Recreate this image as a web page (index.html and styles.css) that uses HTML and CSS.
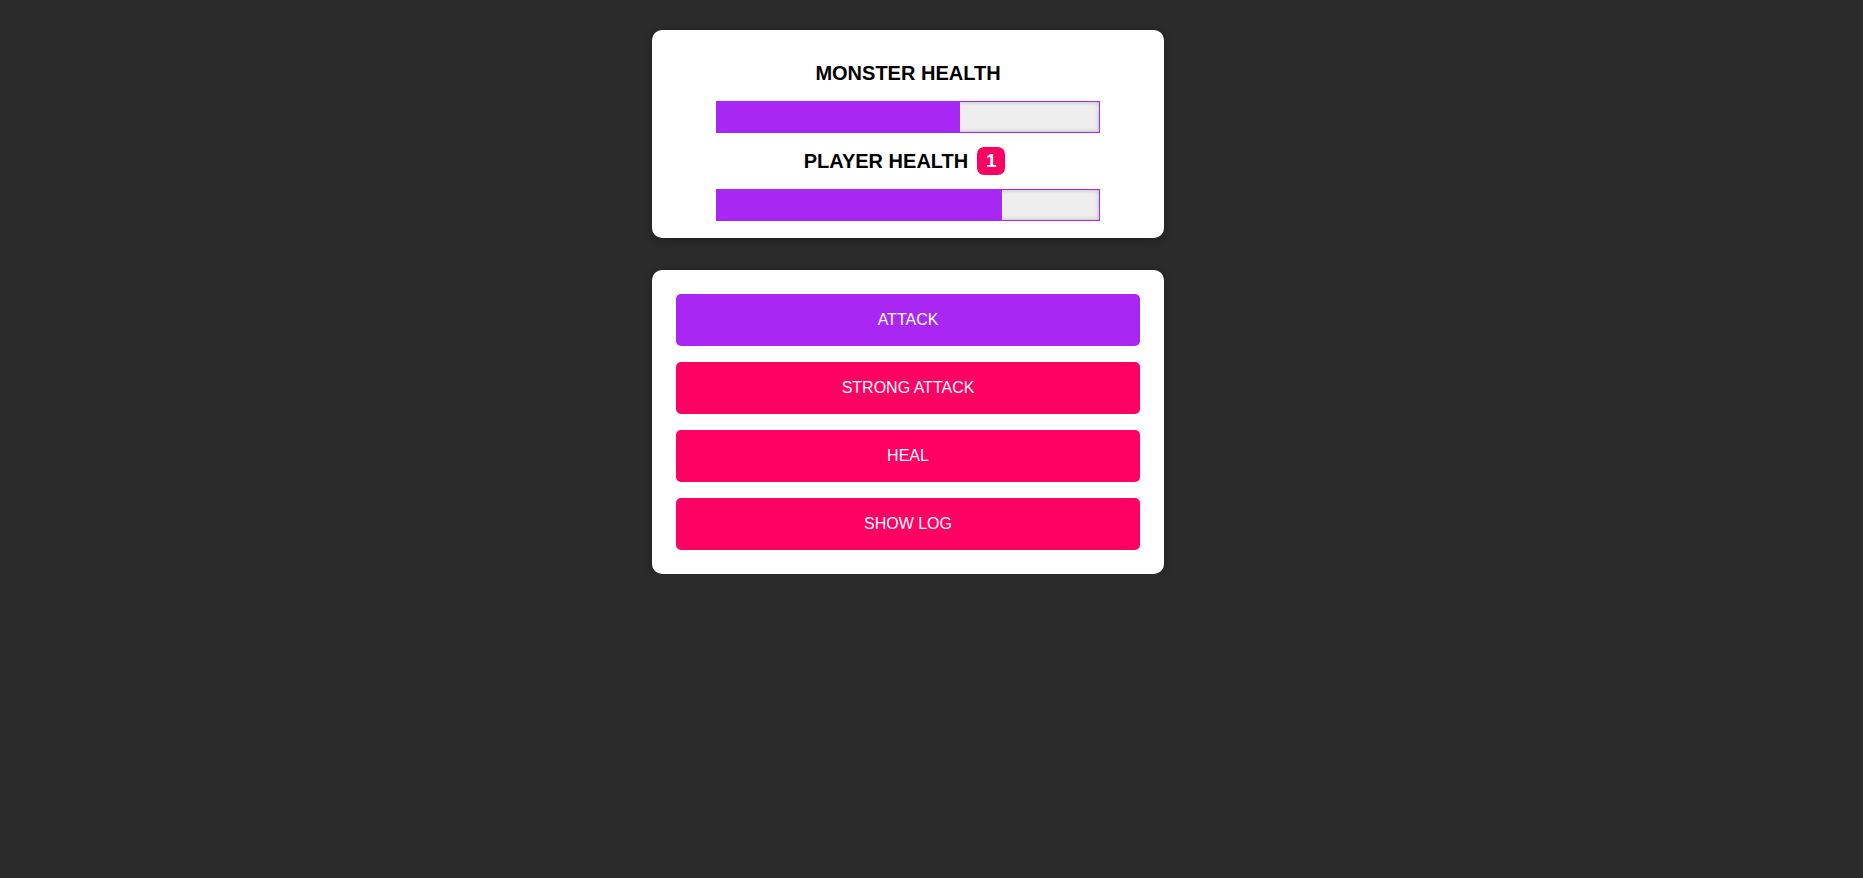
FILE: index.html
```html
<!DOCTYPE html>
<html lang="en">
<head>
<meta charset="utf-8">
<title>Monster Killer</title>
<link rel="stylesheet" href="styles.css">
</head>
<body>
<main class="page">
  <section class="card health">
    <h2 class="label">MONSTER HEALTH</h2>
    <div class="bar"><div class="fill" style="width: 64%"></div></div>
    <div class="player-row">
      <h2 class="label">PLAYER HEALTH</h2>
      <span class="badge">1</span>
    </div>
    <div class="bar"><div class="fill" style="width: 74.8%"></div></div>
  </section>
  <section class="card controls">
    <button class="btn btn-primary">ATTACK</button>
    <button class="btn">STRONG ATTACK</button>
    <button class="btn">HEAL</button>
    <button class="btn">SHOW LOG</button>
  </section>
</main>
</body>
</html>
```
FILE: styles.css
```css
* { box-sizing: border-box; }

html, body {
  margin: 0;
  background: #2b2b2b;
  font-family: "Liberation Sans", Arial, sans-serif;
}

.page {
  display: flex;
  flex-direction: column;
  align-items: center;
  gap: 32px;
  padding: 30px 47px 0 0;
}

.card {
  width: 512px;
  background: #fff;
  border-radius: 10px;
  box-shadow: 0 2px 8px rgba(0, 0, 0, 0.26);
}

.health {
  display: flex;
  flex-direction: column;
  align-items: center;
  padding: 31px 0 17px;
}

.label {
  margin: 0;
  font-size: 20px;
  line-height: 24px;
  font-weight: bold;
  color: #000;
}

.health > .label { margin-bottom: 16px; }

.bar {
  position: relative;
  width: 384px;
  height: 32px;
  border: 1px solid #a927f2;
  background: #eee;
  box-shadow: inset 0 0 4px rgba(0, 0, 0, 0.25);
}

.fill {
  position: absolute;
  left: -1px;
  top: -1px;
  bottom: -1px;
  background: #a927f2;
}

.player-row {
  display: flex;
  align-items: center;
  gap: 9px;
  margin: 14px 7px 14px 0;
  height: 28px;
}

.badge {
  display: flex;
  align-items: center;
  justify-content: center;
  width: 28px;
  height: 28px;
  border-radius: 7px;
  background: #ff0062;
  color: #fff;
  font-weight: bold;
  font-size: 19px;
}

.controls {
  display: flex;
  flex-direction: column;
  gap: 16px;
  padding: 24px;
}

.btn {
  display: block;
  width: 100%;
  height: 52px;
  border: none;
  border-radius: 5px;
  background: #ff0062;
  color: #fff;
  font-family: "Liberation Sans", Arial, sans-serif;
  font-size: 16px;
  cursor: pointer;
}

.btn-primary { background: #a927f2; }
```
